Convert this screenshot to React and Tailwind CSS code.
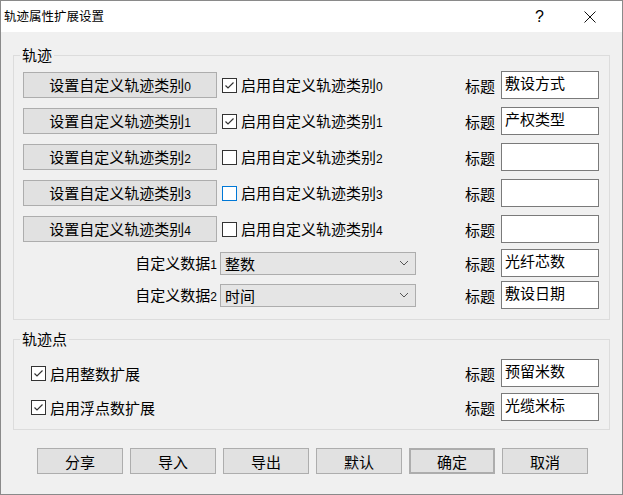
import React from 'react'

const cjk = { fontFamily: '"Noto Sans CJK SC", "Noto Sans", sans-serif' }

// 小号数字，和窗口里的西文字体一样
function Num({ n }) {
  return <span className="font-['Liberation_Sans',sans-serif] text-[12px]">{n}</span>
}

function Check({ checked, focus }) {
  return (
    <span
      className={`inline-flex h-[15px] w-[15px] shrink-0 items-center justify-center bg-white border ${
        focus ? 'border-[#0078d7]' : 'border-[#333333]'
      }`}
    >
      {checked && (
        <svg width="13" height="13" viewBox="0 0 13 13">
          <path d="M2.5 6.5 L5 9 L10.5 3.5" fill="none" stroke="#333333" strokeWidth="1.2" />
        </svg>
      )}
    </span>
  )
}

function Btn({ children, className = '' }) {
  return (
    <button
      className={`flex h-[26px] items-center justify-center border border-[#adadad] bg-[#e1e1e1] text-[15px] leading-none text-black ${className}`}
    >
      <span>{children}</span>
    </button>
  )
}

function TitleBox({ value }) {
  return (
    <div className="ml-auto flex items-center">
      <span className="text-[15px] leading-none">标题</span>
      <div className="ml-[6px] h-[28px] w-[98px] border border-[#7a7a7a] bg-white px-[3px] pt-[2px] text-[15px] leading-[18px]">
        {value}
      </div>
    </div>
  )
}

function Combo({ value }) {
  return (
    <div className="ml-[3px] flex h-[23px] w-[196px] items-center border border-[#adadad] bg-[#e5e5e5] pl-[4px] pr-[6px] text-[15px] leading-none">
      <span>{value}</span>
      <svg className="ml-auto" width="10" height="6" viewBox="0 0 10 6">
        <path d="M1 1 L5 5 L9 1" fill="none" stroke="#555" strokeWidth="1" />
      </svg>
    </div>
  )
}

const types = [
  { checked: true, title: '敷设方式' },
  { checked: true, title: '产权类型' },
  { checked: false, title: '' },
  { checked: false, title: '', focus: true },
  { checked: false, title: '' },
]

export default function App() {
  return (
    <div
      style={cjk}
      className="flex h-[495px] w-[623px] flex-col border border-[#8a8a8a] bg-[#f0f0f0] text-black"
    >
      {/* 标题栏 */}
      <div className="flex h-[31px] shrink-0 items-center bg-white pl-[3px]">
        <span className="text-[12.5px] leading-none">轨迹属性扩展设置</span>
        <span className="ml-auto mr-[40px] font-['Liberation_Sans',sans-serif] text-[16px] leading-none">?</span>
        <svg className="mr-[26px]" width="12" height="12" viewBox="0 0 12 12">
          <path d="M0.5 0.5 L11.5 11.5 M11.5 0.5 L0.5 11.5" stroke="#111" strokeWidth="1" />
        </svg>
      </div>

      {/* 轨迹 */}
      <fieldset className="mx-[12px] mt-[13px] border border-[#dcdcdc] pb-[8px] pl-[9px] pr-[10px] pt-[2px]">
        <legend className="-ml-[3px] px-[2px] text-[15px] leading-[20px]">轨迹</legend>
        {types.map((t, i) => (
          <div key={i} className="flex h-[36px] items-center">
            <Btn className="w-[194px]">
              设置自定义轨迹类别<Num n={i} />
            </Btn>
            <div className="ml-[5px] flex items-center">
              <Check checked={t.checked} focus={t.focus} />
              <span className="ml-[4px] text-[15px] leading-none">
                启用自定义轨迹类别<Num n={i} />
              </span>
            </div>
            <TitleBox value={t.title} />
          </div>
        ))}
        {[
          { n: 1, v: '整数', title: '光纤芯数' },
          { n: 2, v: '时间', title: '敷设日期' },
        ].map((c) => (
          <div key={c.n} className="flex h-[32px] items-center">
            <span className="w-[194px] text-right text-[15px] leading-none">
              自定义数据<Num n={c.n} />
            </span>
            <Combo value={c.v} />
            <TitleBox value={c.title} />
          </div>
        ))}
      </fieldset>

      {/* 轨迹点 */}
      <fieldset className="mx-[12px] mt-[9px] border border-[#dcdcdc] pb-[5px] pl-[17px] pr-[10px] pt-[7px]">
        <legend className="-ml-[11px] px-[2px] text-[15px] leading-[20px]">轨迹点</legend>
        {[
          { label: '启用整数扩展', title: '预留米数' },
          { label: '启用浮点数扩展', title: '光缆米标' },
        ].map((r) => (
          <div key={r.label} className="flex h-[34px] items-center">
            <Check checked />
            <span className="ml-[4px] text-[15px] leading-none">{r.label}</span>
            <TitleBox value={r.title} />
          </div>
        ))}
      </fieldset>

      {/* 底部按钮 */}
      <div className="mt-[18px] flex gap-[7px] pl-[36px]">
        <Btn className="w-[86px]">分享</Btn>
        <Btn className="w-[86px]">导入</Btn>
        <Btn className="w-[86px]">导出</Btn>
        <Btn className="w-[86px]">默认</Btn>
        <Btn className="w-[86px] border-2 border-[#0078d7]">确定</Btn>
        <Btn className="w-[86px]">取消</Btn>
      </div>
    </div>
  )
}
